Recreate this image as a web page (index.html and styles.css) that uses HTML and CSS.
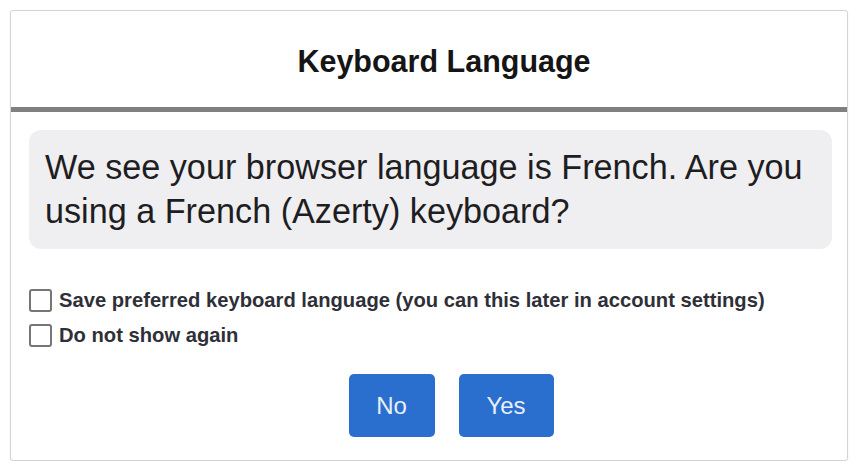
FILE: index.html
```html
<!DOCTYPE html>
<html lang="en">
<head>
<meta charset="utf-8">
<title>Keyboard Language</title>
<link rel="stylesheet" href="styles.css">
</head>
<body>
<div class="dialog">
  <div class="header">
    <h1 class="title">Keyboard Language</h1>
  </div>
  <div class="content">
    <div class="message">We see your browser language is French. Are you using a French (Azerty) keyboard?</div>
    <div class="options">
      <label class="option"><span class="box"></span><span class="label-text">Save preferred keyboard language (you can this later in account settings)</span></label>
      <label class="option"><span class="box"></span><span class="label-text">Do not show again</span></label>
    </div>
    <div class="actions">
      <button class="btn btn-no">No</button>
      <button class="btn btn-yes">Yes</button>
    </div>
  </div>
</div>
</body>
</html>
```

FILE: styles.css
```css
html, body {
  margin: 0;
  padding: 0;
  background: #ffffff;
}

body {
  font-family: "Liberation Sans", Arial, sans-serif;
  padding: 10px 0 0 10px;
}

.dialog {
  width: 836px;
  height: 449px;
  border: 1px solid #d4d4d4;
  border-radius: 3px;
  box-shadow: 0 1px 2px rgba(0, 0, 0, 0.08);
  background: #ffffff;
  box-sizing: content-box;
}

.header {
  height: 96px;
  border-bottom: 5px solid #808080;
  display: flex;
  align-items: center;
  justify-content: center;
}

.title {
  margin: 0;
  font-size: 30.5px;
  font-weight: bold;
  color: #151515;
  padding: 4px 0 0 30px;
}

.content {
  padding: 18px 15px 0 18px;
}

.message {
  background: #efeff1;
  border-radius: 12px;
  height: 119px;
  box-sizing: border-box;
  padding: 15px 16px 0 16px;
  font-size: 34.2px;
  line-height: 44px;
  color: #1e1e22;
}

.options {
  margin-top: 39px;
  display: flex;
  flex-direction: column;
  gap: 11px;
}

.option {
  display: flex;
  align-items: center;
  gap: 7px;
  height: 24px;
}

.box {
  width: 19px;
  height: 19px;
  border: 2px solid #767676;
  border-radius: 3px;
  background: #ffffff;
  flex: none;
}

.label-text {
  font-size: 20.2px;
  font-weight: bold;
  color: #2f2f38;
}

.actions {
  margin-top: 27px;
  display: flex;
  justify-content: center;
  gap: 24px;
  padding-left: 41px;
}

.btn {
  height: 63px;
  border: none;
  border-radius: 5px;
  background: #2b6fce;
  color: #e8eefa;
  font-family: "Liberation Sans", Arial, sans-serif;
  font-size: 24px;
  padding: 0;
}

.btn-no {
  width: 86px;
}

.btn-yes {
  width: 95px;
}
```
